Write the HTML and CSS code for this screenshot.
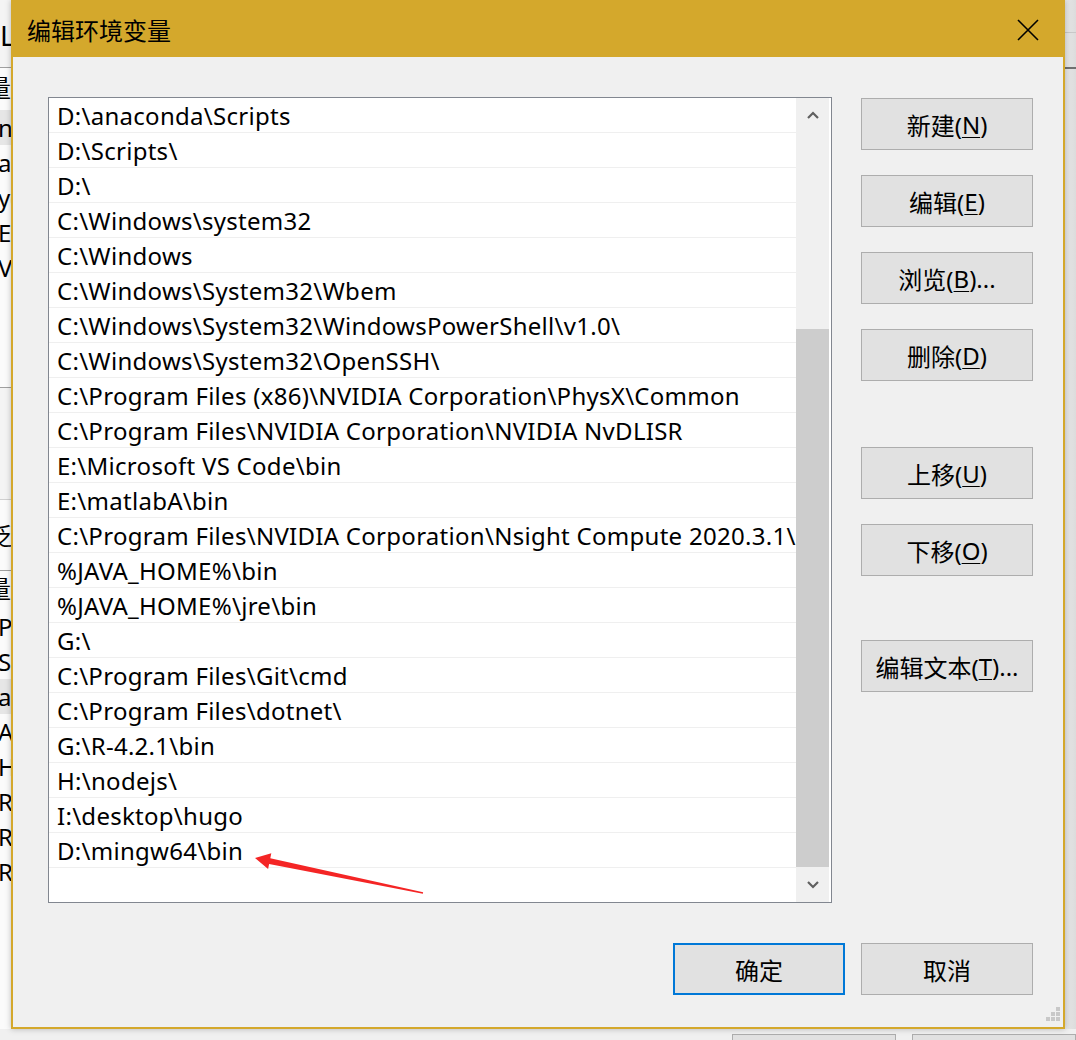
FILE: index.html
```html
<!DOCTYPE html>
<html lang="zh-CN">
<head>
<meta charset="utf-8">
<title>编辑环境变量</title>
<link rel="stylesheet" href="styles.css">
</head>
<body>
<div class="desk">
  <div class="behind-left">
    <div class="bl-head">L</div>
    <div class="bl-row bl-first">量</div>
    <div class="bl-row bl-sel">n</div>
    <div class="bl-row">at</div>
    <div class="bl-row">y(</div>
    <div class="bl-row">EI</div>
    <div class="bl-row">V</div>
    <div class="bl-gap1"></div>
    <div class="bl-gap2"></div>
    <div class="bl-row bl-cjk">泛</div>
    <div class="bl-row bl-line">量</div>
    <div class="bl-row">P</div>
    <div class="bl-row">S</div>
    <div class="bl-row bl-sel">at</div>
    <div class="bl-row">A</div>
    <div class="bl-row">H</div>
    <div class="bl-row">R</div>
    <div class="bl-row">R</div>
    <div class="bl-row">R</div>
  </div>

  <div class="dialog">
    <div class="titlebar">
      <span class="title">编辑环境变量</span>
      <span class="close">
        <svg width="22" height="22" viewBox="0 0 22 22"><path d="M1 1 L21 21 M21 1 L1 21" stroke="#000" stroke-width="1.6" fill="none"/></svg>
      </span>
    </div>
    <div class="body">
      <div class="main">
        <div class="listbox">
          <div class="rows">
            <div class="row">D:\anaconda\Scripts</div>
            <div class="row">D:\Scripts\</div>
            <div class="row">D:\</div>
            <div class="row">C:\Windows\system32</div>
            <div class="row">C:\Windows</div>
            <div class="row">C:\Windows\System32\Wbem</div>
            <div class="row">C:\Windows\System32\WindowsPowerShell\v1.0\</div>
            <div class="row">C:\Windows\System32\OpenSSH\</div>
            <div class="row">C:\Program Files (x86)\NVIDIA Corporation\PhysX\Common</div>
            <div class="row">C:\Program Files\NVIDIA Corporation\NVIDIA NvDLISR</div>
            <div class="row">E:\Microsoft VS Code\bin</div>
            <div class="row">E:\matlabA\bin</div>
            <div class="row">C:\Program Files\NVIDIA Corporation\Nsight Compute 2020.3.1\</div>
            <div class="row">%JAVA_HOME%\bin</div>
            <div class="row">%JAVA_HOME%\jre\bin</div>
            <div class="row">G:\</div>
            <div class="row">C:\Program Files\Git\cmd</div>
            <div class="row">C:\Program Files\dotnet\</div>
            <div class="row">G:\R-4.2.1\bin</div>
            <div class="row">H:\nodejs\</div>
            <div class="row">I:\desktop\hugo</div>
            <div class="row">D:\mingw64\bin</div>
          </div>
          <div class="scrollbar">
            <div class="sb-btn">
              <svg width="12" height="8" viewBox="0 0 12 8"><path d="M1 7 L6 2 L11 7" stroke="#606060" stroke-width="2.2" fill="none"/></svg>
            </div>
            <div class="sb-gap"></div>
            <div class="sb-thumb"></div>
            <div class="sb-rest"></div>
            <div class="sb-btn">
              <svg width="12" height="8" viewBox="0 0 12 8"><path d="M1 1 L6 6 L11 1" stroke="#606060" stroke-width="2.2" fill="none"/></svg>
            </div>
          </div>
          <svg class="annot" width="200" height="60" viewBox="240 845 200 60">
            <polygon points="255,858 271.3,853.3 270.3,858.2 423.1,892.3 422.9,893.7 269.1,864 268.1,868.9" fill="#f42525"/>
          </svg>
        </div>
        <div class="side">
          <button class="btn">新建(<u>N</u>)</button>
          <button class="btn">编辑(<u>E</u>)</button>
          <button class="btn">浏览(<u>B</u>)...</button>
          <button class="btn">删除(<u>D</u>)</button>
          <button class="btn gap-big">上移(<u>U</u>)</button>
          <button class="btn">下移(<u>O</u>)</button>
          <button class="btn gap-big2">编辑文本(<u>T</u>)...</button>
        </div>
      </div>
      <div class="footer">
        <button class="btn btn-default">确定</button>
        <button class="btn">取消</button>
      </div>
      <div class="grip">
        <svg width="14" height="14" viewBox="0 0 14 14" fill="#c8c8c8">
          <rect x="10" y="0" width="4" height="4"/>
          <rect x="5" y="5" width="4" height="4"/><rect x="10" y="5" width="4" height="4"/>
          <rect x="0" y="10" width="4" height="4"/><rect x="5" y="10" width="4" height="4"/><rect x="10" y="10" width="4" height="4"/>
        </svg>
      </div>
    </div>
  </div>

  <div class="behind-right">
    <div class="br-a"></div>
    <div class="br-b"></div>
  </div>

  <div class="behind-bottom">
    <div class="bb-btn"></div>
    <div class="bb-btn"></div>
  </div>
</div>
</body>
</html>
```

FILE: styles.css
```css
* { box-sizing: border-box; }
html, body { margin: 0; padding: 0; }
body {
  width: 1076px;
  height: 1040px;
  overflow: hidden;
  background: #f0f0f0;
  font-family: "Noto Sans", "Noto Sans CJK SC", sans-serif;
  color: #000;
}
.desk {
  display: grid;
  grid-template-columns: 11px 1054px 11px;
  grid-template-rows: 1029px 11px;
  width: 1076px;
  height: 1040px;
}

/* window behind, left */
.behind-left {
  background: #fbfbfb;
  overflow: hidden;
  display: flex;
  flex-direction: column;
  font-size: 24px;
  line-height: 35px;
  white-space: nowrap;
}
.bl-head {
  height: 68px;
  flex: none;
  font-size: 28px;
  line-height: 70px;
  border-bottom: 1px solid #a0a0a0;
  background: #f4f4f4;
}
.bl-row { height: 35px; flex: none; margin-left: -2px; }
.bl-first { height: 42px; line-height: 40px; margin-left: -13px; }
.bl-sel { background: #e6e6e6; }
.bl-gap1 { height: 103px; flex: none; border-bottom: 1px solid #a0a0a0; }
.bl-gap2 { height: 112px; flex: none; border-bottom: 1px solid #d0d0d0; background: #f4f4f4; }
.bl-cjk { height: 70px; padding-top: 18px; margin-left: -12px; }
.bl-line { height: 39px; border-top: 1px solid #a0a0a0; margin-left: -13px; line-height: 36px; }

/* dialog */
.dialog {
  display: flex;
  flex-direction: column;
  background: #d4a82c;
  padding: 0 2px 2px 2px;
  box-shadow: 0 0 6px rgba(0,0,0,0.25);
  position: relative;
  z-index: 1;
}
.titlebar {
  height: 57px;
  flex: none;
  display: flex;
  align-items: center;
  justify-content: space-between;
  padding: 0 24px 0 14px;
}
.title {
  font-family: "Noto Sans CJK SC", sans-serif;
  font-size: 24px;
  margin-top: 2px;
}
.close { display: flex; margin-top: 2px; }

.body {
  flex: 1;
  background: #f0f0f0;
  padding: 40px 30px 0 35px;
  display: flex;
  flex-direction: column;
  position: relative;
}
.main {
  display: flex;
  gap: 29px;
}

.listbox {
  width: 785px;
  height: 806px;
  border: 1px solid #828790;
  background: #fff;
  display: flex;
  padding-right: 2px;
  position: relative;
}
.rows { flex: 1; display: flex; flex-direction: column; overflow: hidden; }
.row {
  height: 35px;
  flex: none;
  border-bottom: 1px solid #efefef;
  padding-left: 8px;
  font-size: 24px;
  letter-spacing: 0.28px;
  line-height: 36px;
  white-space: nowrap;
  overflow: hidden;
}
.scrollbar {
  width: 33px;
  flex: none;
  background: #f0f0f0;
  display: flex;
  flex-direction: column;
}
.sb-btn {
  height: 34px;
  flex: none;
  display: flex;
  align-items: center;
  justify-content: center;
}
.sb-gap { height: 197px; flex: none; }
.sb-thumb { height: 538px; flex: none; background: #cdcdcd; }
.sb-rest { flex: 1; }

.annot {
  position: absolute;
  left: 191px;
  top: 747px;
}

.side {
  display: flex;
  flex-direction: column;
  gap: 25px;
  padding-top: 1px;
}
.btn {
  width: 172px;
  height: 52px;
  background: #e1e1e1;
  border: 1px solid #adadad;
  font-family: "Noto Sans", "Noto Sans CJK SC", sans-serif;
  font-size: 24px;
  color: #000;
  padding: 0;
  display: flex;
  align-items: center;
  justify-content: center;
}
.btn u { text-underline-offset: 3px; text-decoration-thickness: 1px; }
.gap-big { margin-top: 41px; }
.gap-big2 { margin-top: 39px; }

.footer {
  display: flex;
  justify-content: flex-end;
  gap: 16px;
  margin-top: 40px;
}
.btn-default { border: 2px solid #0078d7; }

.grip {
  position: absolute;
  right: 3px;
  bottom: 6px;
  display: flex;
}

/* window behind, right */
.behind-right {
  background: linear-gradient(to right, #e8e8e8, #dcdcdc);
  display: flex;
  flex-direction: column;
}
.br-a { height: 33px; flex: none; border-bottom: 1px solid #c8c8c8; }
.br-b { height: 36px; flex: none; border-bottom: 2px solid #707070; }

/* window behind, bottom */
.behind-bottom {
  grid-column: 1 / 4;
  background: #f0f0f0;
  display: flex;
  gap: 16px;
  padding: 5px 0 0 732px;
}
.bb-btn {
  width: 173px;
  height: 20px;
  border: 1px solid #adadad;
  background: #e1e1e1;
}
```
